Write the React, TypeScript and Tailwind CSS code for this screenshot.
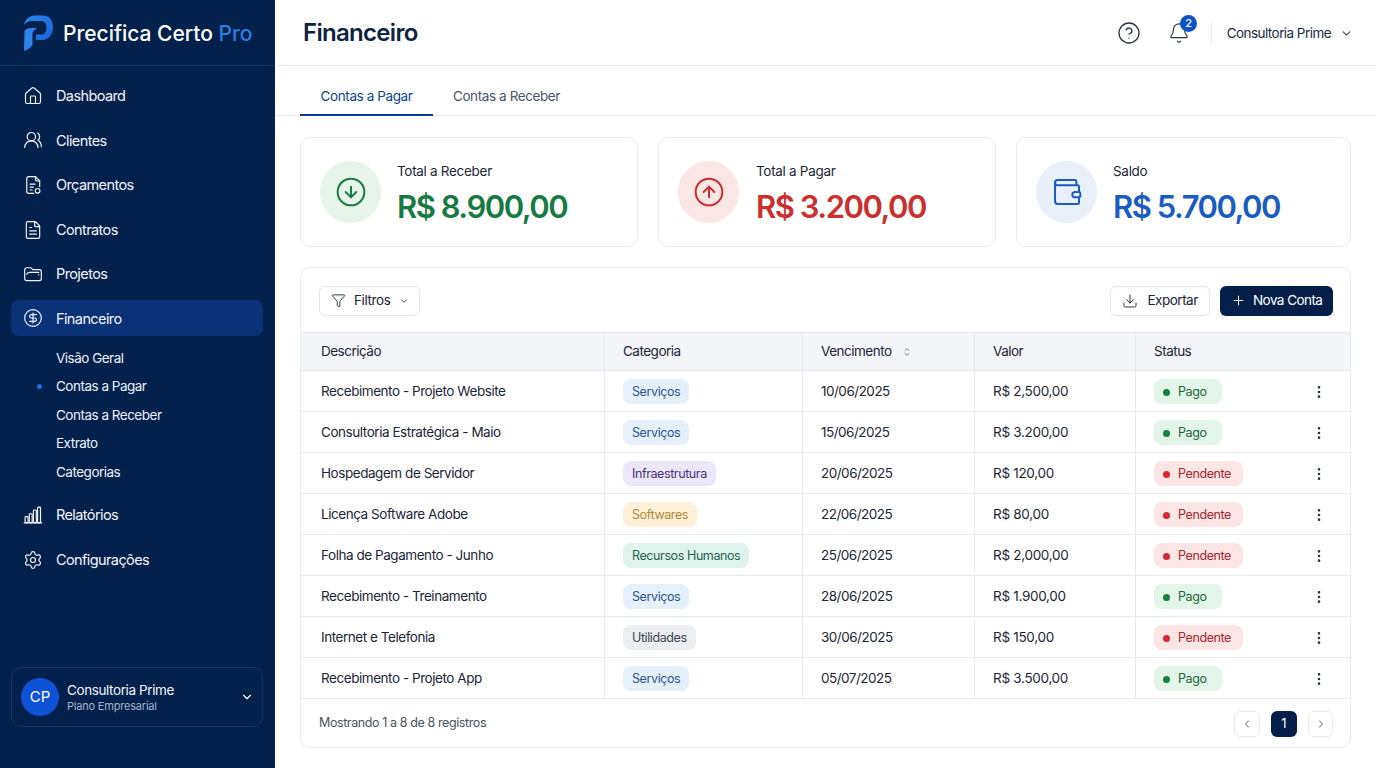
import React from "react";
import { House, UsersRound, FileText, CircleDollarSign, Settings, ChevronDown, ChevronLeft, ChevronRight, ChevronsUpDown, CircleHelp, Bell, ArrowDownCircle, ArrowUpCircle, Wallet, Funnel, Download, Plus, EllipsisVertical } from "lucide-react";

const Logo = () => (
  <svg width="31" height="36" viewBox="0 0 31 36">
    <defs>
      <linearGradient id="lg" x1="0" y1="0" x2="1" y2="1">
        <stop offset="0" stopColor="#2a86ee" />
        <stop offset="1" stopColor="#1a62d8" />
      </linearGradient>
    </defs>
    <path d="M1 10 C2 4 6 1 12 0.5 L20 0.5 C27 0.5 30 6 30 12.5 C30 20 25 25 19 25 L13 25 L13 19.5 L19 19.5 C22 19.5 23.5 16 23.5 12.5 C23.5 8.5 21.5 6 18 6 L9 6 C5 6 2.5 8 1 10 Z" fill="url(#lg)" />
    <path d="M1.5 16 C3 14 5 13 8 13 L14 13 C12 15 9.5 16 9.5 19 L9.5 30 C8 33 4 35 1 36 Z" fill="#2f82ec" />
  </svg>
);

type IconProps = { size?: number; strokeWidth?: number; className?: string };

const Budget = ({ size = 20, strokeWidth = 1.4 }: IconProps) => (
  <svg width={size} height={size} viewBox="0 0 24 24" fill="none" stroke="currentColor" strokeWidth={strokeWidth} strokeLinecap="round" strokeLinejoin="round">
    <path d="M13 22H7a2.5 2.5 0 0 1-2.5-2.5V4.5A2.5 2.5 0 0 1 7 2h8l5 5v7" />
    <path d="M15 2v3a2 2 0 0 0 2 2h3" />
    <path d="M8.5 11h6M8.5 14.5h4M8.5 18h2.5" />
    <circle cx="17.5" cy="19" r="2.8" />
  </svg>
);

const Folder = ({ size = 20, strokeWidth = 1.4 }: IconProps) => (
  <svg width={size} height={size} viewBox="0 0 24 24" fill="none" stroke="currentColor" strokeWidth={strokeWidth} strokeLinecap="round" strokeLinejoin="round">
    <path d="M2 7a2.5 2.5 0 0 1 2.5-2.5h4.3a2 2 0 0 1 1.6.8l1.1 1.4h8a2.5 2.5 0 0 1 2.5 2.5v8.3a2.5 2.5 0 0 1-2.5 2.5h-15A2.5 2.5 0 0 1 2 17.5Z" />
    <path d="M4.5 12.5C5 10.8 6 10 7.5 10h11.5" />
    <path d="M18.5 13h.5" />
  </svg>
);

const Bars = ({ size = 20, strokeWidth = 1.4 }: IconProps) => (
  <svg width={size} height={size} viewBox="0 0 24 24" fill="none" stroke="currentColor" strokeWidth={strokeWidth} strokeLinecap="round" strokeLinejoin="round">
    <path d="M1.5 21.5h21" />
    <rect x="2.5" y="14" width="3.5" height="7.5" rx="1" />
    <rect x="7.5" y="10.5" width="3.5" height="11" rx="1" />
    <rect x="12.5" y="6" width="3.5" height="15.5" rx="1" />
    <rect x="17.5" y="2.5" width="3.5" height="19" rx="1" />
  </svg>
);

const nav = [
  ["Dashboard", House],
  ["Clientes", UsersRound],
  ["Orçamentos", Budget],
  ["Contratos", FileText],
  ["Projetos", Folder],
] as const;

const subs = ["Visão Geral", "Contas a Pagar", "Contas a Receber", "Extrato", "Categorias"];

const NavItem = ({ label, Icon, active, nudge }: { label: string; Icon: any; active?: boolean; nudge?: boolean }) => (
  <div className={`flex h-[36px] items-center gap-[13px] rounded-lg pl-[12px] text-[14.5px] tracking-[-0.6px] text-[#f1f5fb] ${active ? "bg-[#0a3276]" : ""} ${nudge ? "pt-px" : ""}`}>
    <Icon size={20} strokeWidth={1.4} />
    <span>{label}</span>
  </div>
);

const Sidebar = () => (
  <aside className="flex h-[768px] w-[275px] shrink-0 flex-col bg-[#03214d]">
    <div className="flex h-[66px] shrink-0 items-center gap-[9px] border-b border-[#10305e] pl-[23px]">
      <Logo />
      <div className="pt-[2px] text-[21px] font-medium text-white">
        Precifica Certo <span className="text-[#2f7ce0]">Pro</span>
      </div>
    </div>
    <nav className="flex flex-col gap-[8.4px] pl-[11px] pr-[12px] pt-[12px]">
      {nav.map(([l, I]) => <NavItem key={l} label={l} Icon={I} nudge={l === "Contratos"} />)}
      <NavItem label="Financeiro" Icon={CircleDollarSign} active nudge />
    </nav>
    <div className="mt-[7.5px] flex flex-col pl-[56px] text-[13.5px] tracking-[-0.5px] text-[#eaf0f8]">
      {subs.map((s, i) => (
        <div key={s} className="relative flex h-[28.5px] items-center">
          {i === 1 && <span className="absolute left-[-19px] h-[5px] w-[5px] rounded-full bg-[#2a6bd8]" />}
          {s}
        </div>
      ))}
    </div>
    <nav className="mt-[11px] flex flex-col gap-[8.5px] pl-[11px] pr-[12px]">
      <NavItem label="Relatórios" Icon={Bars} />
      <NavItem label="Configurações" Icon={Settings} nudge />
    </nav>
    <div className="mb-[41px] ml-[11px] mr-[12px] mt-auto flex h-[60px] items-center rounded-[10px] border border-[#17355f] pl-[9px] pr-[8px]">
      <div className="flex h-[38px] w-[38px] items-center justify-center rounded-full bg-[#0f52d6] text-[15px] text-white">CP</div>
      <div className="ml-[8px] flex-1">
        <div className="text-[13.5px] leading-[18px] tracking-[-0.4px] text-[#f1f5fb]">Consultoria Prime</div>
        <div className="text-[11px] leading-[15px] tracking-[-0.2px] text-[#a4b3ca]">Plano Empresarial</div>
      </div>
      <ChevronDown size={14} className="text-white" />
    </div>
  </aside>
);

const Header = () => (
  <header className="flex h-[66px] shrink-0 items-center border-b border-[#e5e8ee] pl-[28px] pr-[23px] pt-px">
    <h1 className="text-[24px] font-semibold tracking-[-0.7px] text-[#0f2240]">Financeiro</h1>
    <div className="ml-auto flex items-center">
      <CircleHelp size={24} strokeWidth={1.3} className="text-[#2b3544]" />
      <div className="relative ml-[27px]">
        <Bell size={22} strokeWidth={1.3} className="text-[#2b3544]" />
        <span className="absolute left-[12.5px] top-[-7px] flex h-[17px] w-[17px] items-center justify-center rounded-full bg-[#0f52c8] text-[11px] font-medium text-white">2</span>
      </div>
      <div className="ml-[21px] h-[24px] w-px bg-[#eceef2]" />
      <span className="ml-[15px] text-[13.5px] tracking-[-0.55px] text-[#1c2a3e]">Consultoria Prime</span>
      <ChevronDown size={13} className="ml-[9px] text-[#3b4656]" />
    </div>
  </header>
);

const Tabs = () => (
  <div className="flex h-[50px] shrink-0 border-b border-[#e5e8ee] pl-[25px] text-[13.5px] tracking-[-0.4px]">
    <div className="flex h-[50px] w-[133px] items-center justify-center border-b-2 border-[#0a3a8a] pt-[13px] text-[#0f3f8f]">Contas a Pagar</div>
    <div className="flex h-[49px] w-[147px] items-center justify-center pt-[11px] text-[#4a5566]">Contas a Receber</div>
  </div>
);

const Stat = ({ label, value, Icon, bg, color, w, gap }: { label: string; value: string; Icon: any; bg: string; color: string; w: string; gap: string }) => (
  <div className={`flex h-[110px] ${w} shrink-0 items-center rounded-[10px] border border-[#e8eaee] bg-white pl-[19px] ${gap}`}>
    <div className={`flex h-[62px] w-[61px] shrink-0 items-center justify-center rounded-full ${bg}`}>
      <Icon size={32} strokeWidth={1.5} className={color} />
    </div>
    <div className="pt-[3px]">
      <div className="text-[13.5px] leading-[20px] tracking-[-0.3px] text-[#1c2636]">{label}</div>
      <div className={`mt-[6px] text-[31px] font-semibold leading-[40px] tracking-[-1.5px] ${color}`}>{value}</div>
    </div>
  </div>
);

const tones: Record<string, string> = {
  "Serviços": "bg-[#e5f0fa] text-[#2a5590]",
  "Infraestrutura": "bg-[#ece7f8] text-[#46337e]",
  "Softwares": "bg-[#fdf1d9] text-[#b58a35]",
  "Recursos Humanos": "bg-[#dff3ec] text-[#1d6650]",
  "Utilidades": "bg-[#eceef1] text-[#3c4553]",
};

const rows = [
  ["Recebimento - Projeto Website", "Serviços", "10/06/2025", "R$ 2,500,00", "Pago"],
  ["Consultoria Estratégica - Maio", "Serviços", "15/06/2025", "R$ 3.200,00", "Pago"],
  ["Hospedagem de Servidor", "Infraestrutura", "20/06/2025", "R$ 120,00", "Pendente"],
  ["Licença Software Adobe", "Softwares", "22/06/2025", "R$ 80,00", "Pendente"],
  ["Folha de Pagamento - Junho", "Recursos Humanos", "25/06/2025", "R$ 2,000,00", "Pendente"],
  ["Recebimento - Treinamento", "Serviços", "28/06/2025", "R$ 1.900,00", "Pago"],
  ["Internet e Telefonia", "Utilidades", "30/06/2025", "R$ 150,00", "Pendente"],
  ["Recebimento - Projeto App", "Serviços", "05/07/2025", "R$ 3.500,00", "Pago"],
];

const cols = "grid grid-cols-[304px_198px_172px_161px_1fr]";
const first = "flex items-center border-r border-[#e6e9ee] pl-[20px]";
const cell = "flex items-center border-r border-[#e6e9ee] pl-[18px]";

const Status = ({ s }: { s: string }) => {
  const pago = s === "Pago";
  return (
    <span className={`flex h-[25px] items-center gap-[8px] rounded-[8px] pl-[9px] pt-px text-[12.5px] tracking-[-0.4px] ${pago ? "w-[68px] bg-[#e3f4e8] text-[#1a6638]" : "w-[89px] bg-[#fce6e5] text-[#a3262e]"}`}>
      <span className={`h-[7px] w-[7px] rounded-full ${pago ? "bg-[#158040]" : "bg-[#d22b35]"}`} />
      {s}
    </span>
  );
};

const Table = () => (
  <div className="mt-[20px] h-[481px] w-[1051px] overflow-hidden rounded-[10px] border border-[#e8eaee] bg-white">
    <div className="flex h-[64px] items-center pl-[18px] pr-[17px] pt-px">
      <div className="flex h-[30px] w-[101px] items-center rounded-[6px] border border-[#e4e6ea] pl-[11px] text-[13.5px] tracking-[-0.4px] text-[#1c2636]">
        <Funnel size={15} strokeWidth={1.4} />
        <span className="ml-[8px]">Filtros</span>
        <ChevronDown size={10} className="ml-[9px]" />
      </div>
      <div className="ml-auto flex h-[30px] w-[100px] items-center rounded-[6px] border border-[#e4e6ea] pl-[11px] text-[13.5px] tracking-[-0.5px] text-[#1c2636]">
        <Download size={16} strokeWidth={1.4} />
        <span className="ml-[9.5px]">Exportar</span>
      </div>
      <div className="ml-[10px] flex h-[30px] w-[113px] items-center rounded-[6px] bg-[#051f4a] pl-[11px] text-[13.5px] tracking-[-0.55px] text-white">
        <Plus size={15} strokeWidth={1.5} />
        <span className="ml-[7px]">Nova Conta</span>
      </div>
    </div>
    <div className={`${cols} h-[39px] border-y border-[#e6e9ee] bg-[#f3f5f8] text-[13.5px] tracking-[-0.5px] text-[#1c2636]`}>
      <div className={first}>Descrição</div>
      <div className={cell}>Categoria</div>
      <div className={cell}>Vencimento<ChevronsUpDown size={10} className="ml-[10px] text-[#6b7482]" /></div>
      <div className={cell}>Valor</div>
      <div className="flex items-center pl-[18px]">Status</div>
    </div>
    {rows.map((r, i) => (
      <div key={i} className={`${cols} h-[41px] border-b border-[#e8ebef] text-[13.5px] tracking-[-0.3px] text-[#1c2636]`}>
        <div className={`${first} pt-px tracking-[-0.45px]`}>{r[0]}</div>
        <div className={`${cell} pt-px`}>
          <span className={`flex h-[25px] items-center rounded-[8px] px-[9px] pt-px text-[12.5px] tracking-[-0.4px] ${tones[r[1]]}`}>{r[1]}</span>
        </div>
        <div className={`${cell} pt-px tracking-[-0.5px]`}>{r[2]}</div>
        <div className={`${cell} pt-px`}>{r[3]}</div>
        <div className="flex items-center pl-[18px] pt-px">
          <Status s={r[4]} />
          <EllipsisVertical size={16} strokeWidth={2} className="ml-auto mr-[23px] text-[#2a3340]" />
        </div>
      </div>
    ))}
    <div className="flex h-[49px] items-center pl-[18px] pr-[17px]">
      <span className="text-[12.5px] tracking-[-0.4px] text-[#4a5361]">Mostrando 1 a 8 de 8 registros</span>
      <div className="ml-auto flex items-center gap-[11px]">
        <span className="flex h-[26px] w-[26px] items-center justify-center rounded-[6px] border border-[#e8eaee] text-[#4a5361]"><ChevronLeft size={12} /></span>
        <span className="flex h-[26px] w-[26px] items-center justify-center rounded-[6px] bg-[#051f4a] text-[13px] text-white">1</span>
        <span className="flex h-[26px] w-[25px] items-center justify-center rounded-[6px] border border-[#e8eaee] text-[#4a5361]"><ChevronRight size={12} /></span>
      </div>
    </div>
  </div>
);

export default function App() {
  return (
    <div className="flex h-[768px] w-[1376px] overflow-hidden bg-white font-['Inter',sans-serif]">
      <Sidebar />
      <main className="flex min-w-0 flex-1 flex-col">
        <Header />
        <Tabs />
        <div className="pl-[25px] pt-[21px]">
          <div className="flex gap-[20px]">
            <Stat label="Total a Receber" value="R$ 8.900,00" Icon={ArrowDownCircle} bg="bg-[#e6f4ea]" color="text-[#177a44]" w="w-[338px]" gap="gap-[16px]" />
            <Stat label="Total a Pagar" value="R$ 3.200,00" Icon={ArrowUpCircle} bg="bg-[#fae6e4]" color="text-[#c9302f]" w="w-[338px]" gap="gap-[17px]" />
            <Stat label="Saldo" value="R$ 5.700,00" Icon={Wallet} bg="bg-[#e9f0fa]" color="text-[#1a5cc0]" w="w-[335px]" gap="gap-[16px]" />
          </div>
          <Table />
        </div>
      </main>
    </div>
  );
}
